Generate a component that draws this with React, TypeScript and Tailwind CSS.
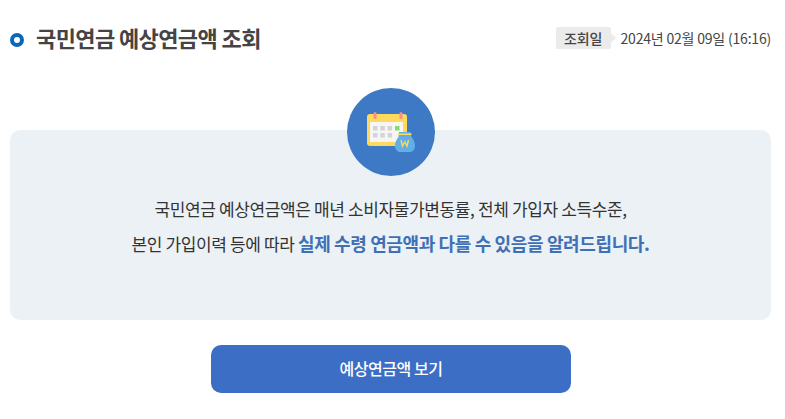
const font = { fontFamily: '"Noto Sans CJK KR", "Noto Sans", sans-serif' };

const CalendarIcon = () => (
  <svg width="88" height="88" viewBox="0 0 88 88" className="block">
    <rect x="20" y="26" width="40" height="32" rx="3" fill="#ffd95a" />
    <rect x="23" y="34" width="33" height="20" fill="#f6f6f6" />
    <rect x="26.500" y="24" width="3" height="7" rx="1.5" fill="#f78f8f" />
    <rect x="52.500" y="24" width="3" height="7" rx="1.5" fill="#f78f8f" />
    {[0, 1, 2].map((i) => (
      <rect key={i} x={26 + i * 7.3} y="38" width="4.5" height="4.5" fill="#d4d4d4" />
    ))}
    <rect x="48" y="38" width="4.5" height="4.5" fill="#7ee06a" />
    {[0, 1, 2].map((i) => (
      <rect key={i} x={26 + i * 7.3} y="45" width="4.5" height="4.5" fill="#d4d4d4" />
    ))}
    <path d="M52 44 h11.500 l1 5 c2.500 3 3.500 6 3.500 9 c0 3.500 -2.500 6 -5 6 h-10 c-2.500 0 -5 -2.500 -5 -6 c0 -3 1 -6 3.500 -9 z" fill="#62aee6" />
    <rect x="51" y="45.500" width="13.500" height="1.500" fill="#ffd95a" />
    <path d="M54 52 l1.500 6 l2.250 -4 l2.250 4 l1.500 -6" fill="none" stroke="#ffd95a" strokeWidth="1.400" />
  </svg>
);

export default function App() {
  return (
    <div className="w-[785px] h-[419px] overflow-hidden bg-white px-[10px] flex flex-col" style={font}>
      <header className="flex items-center justify-between h-[78px] pb-[2px] shrink-0">
        <h1 className="flex items-center gap-[12px] text-[22px] leading-[30px] font-bold tracking-[-0.6px] text-[#444444]">
          <span className="size-[14px] mt-[4px] rounded-full border-[4px] border-[#0a68b8]" />
          <span className="-mt-[2px]">국민연금 예상연금액 조회</span>
        </h1>
        <div className="flex items-center text-[14px] tracking-[-0.2px] text-[#444444]">
          <span className="relative bg-[#ebebeb] rounded-[2px] h-[22px] w-[55px] flex items-center justify-center font-medium">
            조회일
            <span className="absolute -right-[5px] top-[6px] border-y-[5px] border-l-[5px] border-y-transparent border-l-[#ebebeb]" />
          </span>
          <span className="ml-[10px] mr-[4px]">2024년 02월 09일 (16:16)</span>
        </div>
      </header>

      <main className="relative mt-[52px] h-[190px] w-[761px] rounded-[10px] bg-[#ecf1f6] flex flex-col items-center pt-[62px] shrink-0">
        <div className="absolute left-[337px] -top-[42px] size-[88px] rounded-full bg-[#3e79c5]">
          <CalendarIcon />
        </div>
        <p className="text-[17px] leading-[34px] tracking-[-0.37px] text-[#333333] text-center">
          국민연금 예상연금액은 매년 소비자물가변동률, 전체 가입자 소득수준,
          <br />
          본인 가입이력 등에 따라 <strong className="text-[18px] font-bold text-[#3f70b5]">실제 수령 연금액과 다를 수 있음을 알려드립니다.</strong>
        </p>
      </main>

      <button className="mt-[25px] ml-[201px] w-[360px] h-[48px] pb-[2px] rounded-[10px] bg-[#3b6ec4] text-white text-[16px] font-medium tracking-[-0.45px]">
        예상연금액 보기
      </button>
    </div>
  );
}
